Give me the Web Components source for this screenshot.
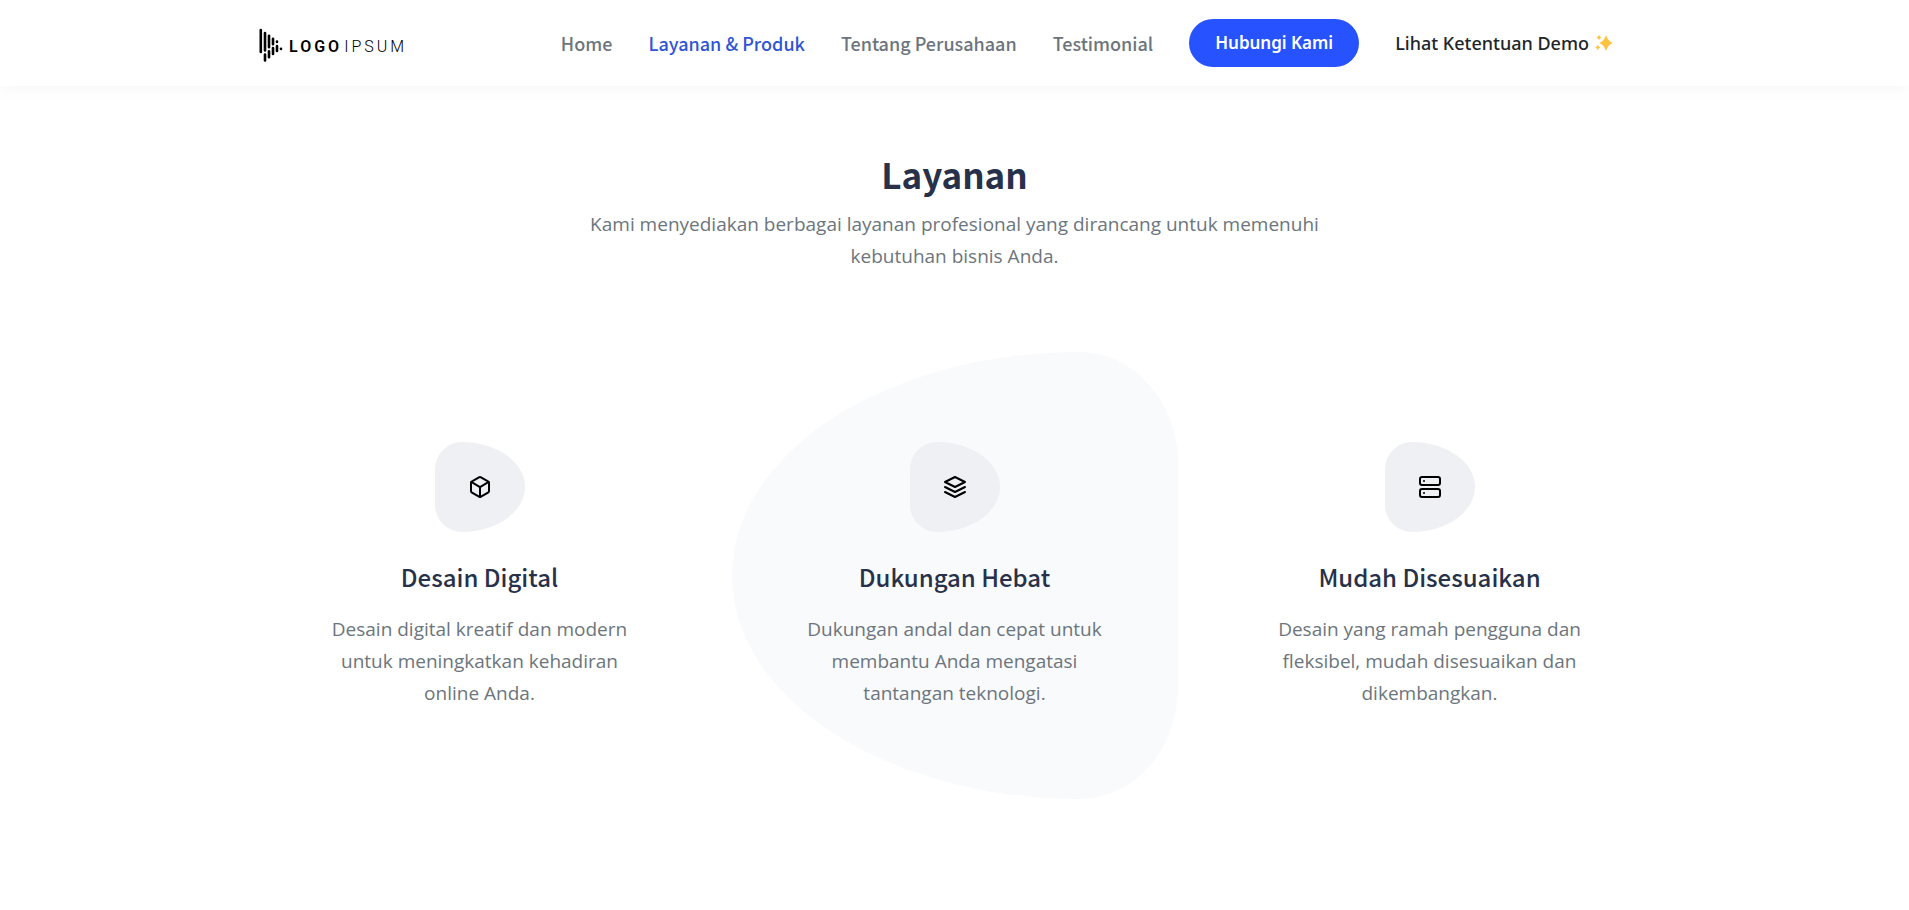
<!DOCTYPE html>
<html lang="id">
<head>
  <meta charset="utf-8">
  <meta name="viewport" content="width=device-width, initial-scale=1">
  <title>Layanan &amp; Produk</title>
  <style>
    body {
      --color-primary: #2652ff;
      --color-link: #2f55d4;
      --color-heading: #273149;
      --color-muted: #6c757d;
      --color-blob: #eff0f4;
      --color-blob-light: #f9fafc;
      --container: 1425px;
      --font-heading: "Noto Sans CJK JP", "Noto Sans CJK SC", sans-serif;
      --font-body: "Open Sans", "Noto Sans", sans-serif;
      --font-action: "Noto Sans", "Open Sans", sans-serif;
      margin: 0;
      background-color: #fff;
      color: #212529;
      font-family: var(--font-body);
      font-size: 19px;
    }
  </style>
</head>
<body>
  <site-header>
    <brand-logo slot="brand"></brand-logo>
    <nav-link href="#home">Home</nav-link>
    <nav-link href="#layanan" active>Layanan &amp; Produk</nav-link>
    <nav-link href="#tentang">Tentang Perusahaan</nav-link>
    <nav-link href="#testimonial">Testimonial</nav-link>
    <button-primary slot="action">Hubungi Kami</button-primary>
    <demo-link slot="action" href="#demo">Lihat Ketentuan Demo</demo-link>
  </site-header>

  <main>
    <section-intro>
      <span slot="title">Layanan</span>
      Kami menyediakan berbagai layanan profesional yang dirancang untuk memenuhi kebutuhan bisnis Anda.
    </section-intro>

    <service-list>
      <service-card icon="box">
        <span slot="title">Desain Digital</span>
        Desain digital kreatif dan modern untuk meningkatkan kehadiran online Anda.
      </service-card>
      <service-card icon="layers" featured>
        <span slot="title">Dukungan Hebat</span>
        Dukungan andal dan cepat untuk membantu Anda mengatasi tantangan teknologi.
      </service-card>
      <service-card icon="server">
        <span slot="title">Mudah Disesuaikan</span>
        Desain yang ramah pengguna dan fleksibel, mudah disesuaikan dan dikembangkan.
      </service-card>
    </service-list>
  </main>

  <script>
    class BaseElement extends HTMLElement {
      constructor() {
        super();
        const shadow = this.attachShadow({ mode: "open" });
        const template = document.createElement("template");
        template.innerHTML = this.render();
        shadow.appendChild(template.content.cloneNode(true));
      }
    }

    class SiteHeader extends BaseElement {
      render() {
        return `
          <style>
            :host {
              display: block;
              background-color: #fff;
              box-shadow: 0 0 20px rgba(0, 0, 0, 0.05);
            }
            .bar {
              box-sizing: border-box;
              max-width: var(--container);
              min-height: 86px;
              margin: 0 auto;
              padding: 0 54px 0 17px;
              display: flex;
              align-items: center;
              justify-content: space-between;
            }
            nav, .menu {
              display: flex;
              align-items: center;
              gap: 36px;
            }
          </style>
          <header class="bar">
            <slot name="brand"></slot>
            <nav aria-label="Menu utama">
              <div class="menu"><slot></slot></div>
              <slot name="action"></slot>
            </nav>
          </header>
        `;
      }
    }

    class BrandLogo extends BaseElement {
      render() {
        return `
          <style>
            :host { display: block; }
            a {
              display: flex;
              align-items: flex-end;
              gap: 6px;
              padding-top: 4px;
              color: #000;
              text-decoration: none;
              font: 300 16px/32px Roboto, sans-serif;
              letter-spacing: 3px;
            }
            b {
              margin-right: 2px;
              font-weight: 600;
            }
            svg { display: block; }
          </style>
          <a href="#home">
            <svg width="24" height="36" viewBox="0 0 24 36" fill="none" stroke="#000" stroke-width="2.6" stroke-linecap="round" aria-hidden="true">
              <path d="M1.800 3v22M6 6v17.500M6 27.500v6M10 8.800v11.400M10 24.200v6M14 11.800v5.400M14 21v6M18 14.600v.4M18 19v5M22 21.800v.1"/>
            </svg>
            <span><b>LOGO</b>IPSUM</span>
          </a>
        `;
      }
    }

    class NavLink extends BaseElement {
      render() {
        const active = this.hasAttribute("active");
        return `
          <style>
            :host { display: block; }
            a {
              display: block;
              color: var(--color-muted);
              font: 500 18px/32px var(--font-heading);
              text-decoration: none;
              white-space: nowrap;
            }
            a:hover, a.active { color: var(--color-link); }
          </style>
          <a href="${this.getAttribute("href")}" ${active ? 'class="active" aria-current="page"' : ""}><slot></slot></a>
        `;
      }
    }

    class ButtonPrimary extends BaseElement {
      render() {
        return `
          <style>
            :host { display: block; }
            button {
              height: 48px;
              padding: 0 26px;
              border: none;
              border-radius: 24px;
              background-color: var(--color-primary);
              color: #fff;
              font: 600 17px/32px var(--font-action);
              white-space: nowrap;
              cursor: pointer;
            }
            button:hover { background-color: var(--color-link); }
          </style>
          <button type="button"><slot></slot></button>
        `;
      }
    }

    class DemoLink extends BaseElement {
      render() {
        return `
          <style>
            :host { display: block; }
            a {
              display: flex;
              align-items: center;
              gap: 6px;
              color: inherit;
              font: 500 18px/32px var(--font-action);
              text-decoration: none;
              white-space: nowrap;
            }
          </style>
          <a href="${this.getAttribute("href")}">
            <slot></slot>
            <svg width="18" height="18" viewBox="0 0 18 18" fill="#fcc43e" aria-hidden="true">
              <path d="M11 1Q12.800 7 17.800 9Q12.800 11 11 17Q9.200 11 4.200 9Q9.200 7 11 1Z"/>
              <path d="M4 .8Q4.500 3 6.500 3.500Q4.500 4 4 6.200Q3.500 4 1.500 3.500Q3.500 3 4 .8Z"/>
              <path d="M2.800 10.800Q3.300 13 5.400 13.500Q3.300 14 2.800 16.200Q2.300 14 .2 13.500Q2.300 13 2.800 10.800Z"/>
            </svg>
          </a>
        `;
      }
    }

    class SectionIntro extends BaseElement {
      render() {
        return `
          <style>
            :host {
              display: block;
              max-width: 760px;
              margin: 0 auto;
              padding: 62px 16px 0;
              text-align: center;
            }
            h2 {
              margin: 0 0 8px;
              color: var(--color-heading);
              font: 700 35px/52px var(--font-heading);
            }
            p {
              margin: 0;
              color: var(--color-muted);
              line-height: 32px;
            }
          </style>
          <h2><slot name="title"></slot></h2>
          <p><slot></slot></p>
        `;
      }
    }

    class ServiceList extends BaseElement {
      render() {
        return `
          <style>
            :host {
              display: grid;
              grid-template-columns: repeat(auto-fit, minmax(380px, 1fr));
              max-width: var(--container);
              margin: 80px auto;
            }
          </style>
          <slot></slot>
        `;
      }
    }

    const icons = {
      box: `
        <path d="M21 16V8a2 2 0 0 0-1-1.730l-7-4a2 2 0 0 0-2 0l-7 4A2 2 0 0 0 3 8v8a2 2 0 0 0 1 1.730l7 4a2 2 0 0 0 2 0l7-4A2 2 0 0 0 21 16z"/>
        <path d="M3.270 6.960 12 12.010l8.730-5.050M12 22.080V12"/>`,
      layers: `
        <path d="M12 2 2 7l10 5 10-5-10-5z"/>
        <path d="M2 17l10 5 10-5M2 12l10 5 10-5"/>`,
      server: `
        <rect x="2" y="2" width="20" height="8" rx="2"/>
        <rect x="2" y="14" width="20" height="8" rx="2"/>
        <path d="M6 6h.01M6 18h.01"/>`
    };

    class ServiceCard extends BaseElement {
      render() {
        return `
          <style>
            :host {
              display: grid;
              justify-items: center;
            }
            article {
              box-sizing: border-box;
              width: 100%;
              max-width: 446px;
              min-height: 447px;
              padding: 90px 68px 0;
              text-align: center;
            }
            :host([featured]) article {
              background-color: var(--color-blob-light);
              border-radius: 78% 22% 22% 78% / 50% 25% 25% 50%;
            }
            .icon {
              width: 90px;
              height: 90px;
              margin: 0 auto 27px;
              display: grid;
              place-items: center;
              background-color: var(--color-blob);
              border-radius: 30% 70% 70% 30% / 30% 50% 50% 30%;
            }
            h3 {
              margin: 0 0 18px;
              color: var(--color-heading);
              font: 500 24px/36px var(--font-heading);
            }
            p {
              margin: 0;
              color: var(--color-muted);
              line-height: 32px;
            }
          </style>
          <article>
            <div class="icon">
              <svg width="24" height="24" viewBox="0 0 24 24" fill="none" stroke="#000" stroke-width="2" stroke-linecap="round" stroke-linejoin="round" aria-hidden="true">${icons[this.getAttribute("icon")]}</svg>
            </div>
            <h3><slot name="title"></slot></h3>
            <p><slot></slot></p>
          </article>
        `;
      }
    }

    customElements.define("site-header", SiteHeader);
    customElements.define("brand-logo", BrandLogo);
    customElements.define("nav-link", NavLink);
    customElements.define("button-primary", ButtonPrimary);
    customElements.define("demo-link", DemoLink);
    customElements.define("section-intro", SectionIntro);
    customElements.define("service-list", ServiceList);
    customElements.define("service-card", ServiceCard);
  </script>
</body>
</html>
